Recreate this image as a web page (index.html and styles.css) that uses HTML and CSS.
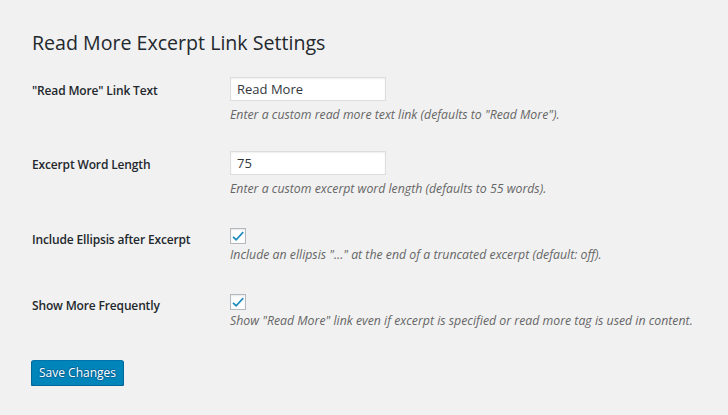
FILE: index.html
```html
<!DOCTYPE html>
<html>
<head>
<meta charset="utf-8">
<link rel="stylesheet" href="styles.css">
</head>
<body>
<div class="wrap">
  <h1 class="title">Read More Excerpt Link Settings</h1>
  <form class="form">
    <div class="row">
      <div class="label">"Read More" Link Text</div>
      <div class="field">
        <input class="text" type="text" value="Read More">
        <p class="desc">Enter a custom read more text link (defaults to "Read More").</p>
      </div>
    </div>
    <div class="row">
      <div class="label">Excerpt Word Length</div>
      <div class="field">
        <input class="text" type="text" value="75">
        <p class="desc">Enter a custom excerpt word length (defaults to 55 words).</p>
      </div>
    </div>
    <div class="row row-check">
      <div class="label">Include Ellipsis after Excerpt</div>
      <div class="field">
        <span class="check"><svg viewBox="0 0 16 16" width="16" height="16"><path d="M3.6 8.2 L6.2 10.6 L12.6 3.6 L13.8 4.8 L6.2 13 L2.4 9.4 Z" fill="#1e8cbe"/></svg></span>
        <p class="desc desc-check">Include an ellipsis "..." at the end of a truncated excerpt (default: off).</p>
      </div>
    </div>
    <div class="row row-check">
      <div class="label">Show More Frequently</div>
      <div class="field">
        <span class="check"><svg viewBox="0 0 16 16" width="16" height="16"><path d="M3.6 8.2 L6.2 10.6 L12.6 3.6 L13.8 4.8 L6.2 13 L2.4 9.4 Z" fill="#1e8cbe"/></svg></span>
        <p class="desc desc-check">Show "Read More" link even if excerpt is specified or read more tag is used in content.</p>
      </div>
    </div>
    <div class="submit">
      <button class="button" type="button">Save Changes</button>
    </div>
  </form>
</div>
</body>
</html>
```
FILE: styles.css
```css
html, body {
  margin: 0;
  padding: 0;
  background: #f1f1f1;
}
body {
  font-family: "Open Sans", "Noto Sans", sans-serif;
  color: #23282d;
  font-size: 13px;
}
.wrap {
  padding: 28px 32px 0 32px;
}
.title {
  margin: 0;
  font-size: 19.6px;
  font-weight: 400;
  line-height: 29px;
  color: #23282d;
}
.form {
  margin-top: 20px;
}
.row {
  display: flex;
  margin-bottom: 26px;
}
.row-check {
  padding-top: 3px;
}
.label {
  width: 198px;
  flex: none;
  padding-top: 5px;
  line-height: 18px;
  font-size: 12px;
  font-weight: 600;
  letter-spacing: -0.15px;
  color: #23282d;
}
.row-check .label {
  padding-top: 3px;
}
.field {
  display: flex;
  flex-direction: column;
  align-items: flex-start;
}
.text {
  box-sizing: border-box;
  width: 156px;
  height: 24px;
  margin: 0;
  padding: 2px 6px;
  border: 1px solid #ddd;
  box-shadow: inset 0 1px 2px rgba(0,0,0,0.07);
  background: #fff;
  font-family: inherit;
  font-size: 13px;
  color: #32373c;
  outline: none;
}
.desc {
  margin: 4px 0 0;
  font-size: 12.3px;
  line-height: 20px;
  font-style: italic;
  color: #666;
}
.desc-check {
  margin-top: 1px;
}
.check {
  box-sizing: border-box;
  width: 16px;
  height: 16px;
  border: 1px solid #b4b9be;
  background: #fff;
  box-shadow: inset 0 1px 2px rgba(0,0,0,0.1);
  display: flex;
  align-items: center;
  justify-content: center;
  overflow: hidden;
}
.check svg {
  flex: none;
}
.submit {
  padding-top: 3px;
}
.button {
  box-sizing: border-box;
  height: 26px;
  padding: 0 7px;
  margin: 0 0 0 -1px;
  font-family: inherit;
  font-size: 12px;
  line-height: 24px;
  color: #fff;
  background: #0085ba;
  border: 1px solid;
  border-color: #0073aa #006799 #006799;
  border-radius: 3px;
  box-shadow: 0 1px 0 #006799;
  text-shadow: 0 -1px 1px #006799, 1px 0 1px #006799, 0 1px 1px #006799, -1px 0 1px #006799;
  cursor: pointer;
}
```
